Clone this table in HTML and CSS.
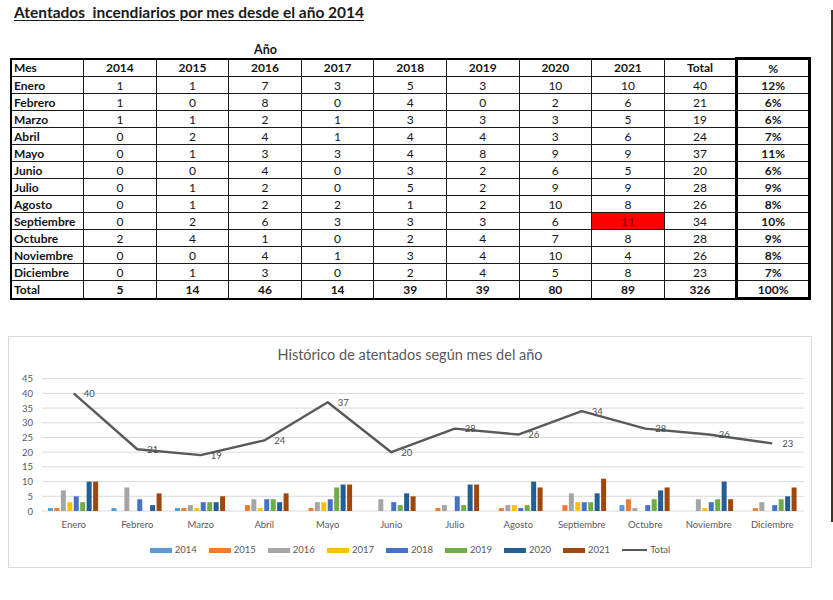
FILE: index.html
```html
<!DOCTYPE html>
<html lang="es">
<head>
<meta charset="utf-8">
<title>Atentados incendiarios por mes desde el año 2014</title>
<link rel="stylesheet" href="styles.css">
</head>
<body>
<div class="page">
  <div class="sheet">
    <h1 class="title">Atentados&nbsp; incendiarios por mes desde el año 2014</h1>
    <div class="anio">Año</div>
    <table class="data">
      <colgroup><col><col><col><col><col><col><col><col><col><col><col></colgroup>
      <tr class="head"><th class="mes">Mes</th><th>2014</th><th>2015</th><th>2016</th><th>2017</th><th>2018</th><th>2019</th><th>2020</th><th>2021</th><th>Total</th><th class="pct">%</th></tr>
      <tr><td class="mes">Enero</td><td>1</td><td>1</td><td>7</td><td>3</td><td>5</td><td>3</td><td>10</td><td>10</td><td>40</td><td class="pct">12%</td></tr>
      <tr><td class="mes">Febrero</td><td>1</td><td>0</td><td>8</td><td>0</td><td>4</td><td>0</td><td>2</td><td>6</td><td>21</td><td class="pct">6%</td></tr>
      <tr><td class="mes">Marzo</td><td>1</td><td>1</td><td>2</td><td>1</td><td>3</td><td>3</td><td>3</td><td>5</td><td>19</td><td class="pct">6%</td></tr>
      <tr><td class="mes">Abril</td><td>0</td><td>2</td><td>4</td><td>1</td><td>4</td><td>4</td><td>3</td><td>6</td><td>24</td><td class="pct">7%</td></tr>
      <tr><td class="mes">Mayo</td><td>0</td><td>1</td><td>3</td><td>3</td><td>4</td><td>8</td><td>9</td><td>9</td><td>37</td><td class="pct">11%</td></tr>
      <tr><td class="mes">Junio</td><td>0</td><td>0</td><td>4</td><td>0</td><td>3</td><td>2</td><td>6</td><td>5</td><td>20</td><td class="pct">6%</td></tr>
      <tr><td class="mes">Julio</td><td>0</td><td>1</td><td>2</td><td>0</td><td>5</td><td>2</td><td>9</td><td>9</td><td>28</td><td class="pct">9%</td></tr>
      <tr><td class="mes">Agosto</td><td>0</td><td>1</td><td>2</td><td>2</td><td>1</td><td>2</td><td>10</td><td>8</td><td>26</td><td class="pct">8%</td></tr>
      <tr><td class="mes">Septiembre</td><td>0</td><td>2</td><td>6</td><td>3</td><td>3</td><td>3</td><td>6</td><td class="alert">11</td><td>34</td><td class="pct">10%</td></tr>
      <tr><td class="mes">Octubre</td><td>2</td><td>4</td><td>1</td><td>0</td><td>2</td><td>4</td><td>7</td><td>8</td><td>28</td><td class="pct">9%</td></tr>
      <tr><td class="mes">Noviembre</td><td>0</td><td>0</td><td>4</td><td>1</td><td>3</td><td>4</td><td>10</td><td>4</td><td>26</td><td class="pct">8%</td></tr>
      <tr><td class="mes">Diciembre</td><td>0</td><td>1</td><td>3</td><td>0</td><td>2</td><td>4</td><td>5</td><td>8</td><td>23</td><td class="pct">7%</td></tr>
      <tr class="total"><td class="mes">Total</td><td>5</td><td>14</td><td>46</td><td>14</td><td>39</td><td>39</td><td>80</td><td>89</td><td>326</td><td class="pct">100%</td></tr>
    </table>

    <div class="chart">
      <h2 class="chart-title">Histórico de atentados según mes del año</h2>
      <svg class="plot" width="802" height="168" viewBox="0 0 802 168" xmlns="http://www.w3.org/2000/svg">
        <g class="grid">
          <line x1="33" x2="795" y1="147" y2="147"/>
          <line x1="33" x2="795" y1="132.3" y2="132.3"/>
          <line x1="33" x2="795" y1="117.6" y2="117.6"/>
          <line x1="33" x2="795" y1="102.9" y2="102.9"/>
          <line x1="33" x2="795" y1="88.2" y2="88.2"/>
          <line x1="33" x2="795" y1="73.5" y2="73.5"/>
          <line x1="33" x2="795" y1="58.8" y2="58.8"/>
          <line x1="33" x2="795" y1="44.1" y2="44.1"/>
          <line x1="33" x2="795" y1="29.4" y2="29.4"/>
          <line x1="33" x2="795" y1="14.7" y2="14.7"/>
        </g>
        <g class="ylab">
          <text x="24" y="147">0</text>
          <text x="24" y="132.3">5</text>
          <text x="24" y="117.6">10</text>
          <text x="24" y="102.9">15</text>
          <text x="24" y="88.2">20</text>
          <text x="24" y="73.5">25</text>
          <text x="24" y="58.8">30</text>
          <text x="24" y="44.1">35</text>
          <text x="24" y="29.4">40</text>
          <text x="24" y="14.7">45</text>
        </g>
        <g transform="translate(0 147) scale(1 -2.94)">
          <g transform="translate(38.95 0)">
            <rect class="s14" x="0" width="5" height="1"/><rect class="s15" x="6.45" width="5" height="1"/><rect class="s16" x="12.9" width="5" height="7"/><rect class="s17" x="19.35" width="5" height="3"/><rect class="s18" x="25.8" width="5" height="5"/><rect class="s19" x="32.25" width="5" height="3"/><rect class="s20" x="38.7" width="5" height="10"/><rect class="s21" x="45.15" width="5" height="10"/>
          </g>
          <g transform="translate(102.45 0)">
            <rect class="s14" x="0" width="5" height="1"/><rect class="s16" x="12.9" width="5" height="8"/><rect class="s18" x="25.8" width="5" height="4"/><rect class="s20" x="38.7" width="5" height="2"/><rect class="s21" x="45.15" width="5" height="6"/>
          </g>
          <g transform="translate(165.95 0)">
            <rect class="s14" x="0" width="5" height="1"/><rect class="s15" x="6.45" width="5" height="1"/><rect class="s16" x="12.9" width="5" height="2"/><rect class="s17" x="19.35" width="5" height="1"/><rect class="s18" x="25.8" width="5" height="3"/><rect class="s19" x="32.25" width="5" height="3"/><rect class="s20" x="38.7" width="5" height="3"/><rect class="s21" x="45.15" width="5" height="5"/>
          </g>
          <g transform="translate(229.45 0)">
            <rect class="s15" x="6.45" width="5" height="2"/><rect class="s16" x="12.9" width="5" height="4"/><rect class="s17" x="19.35" width="5" height="1"/><rect class="s18" x="25.8" width="5" height="4"/><rect class="s19" x="32.25" width="5" height="4"/><rect class="s20" x="38.7" width="5" height="3"/><rect class="s21" x="45.15" width="5" height="6"/>
          </g>
          <g transform="translate(292.95 0)">
            <rect class="s15" x="6.45" width="5" height="1"/><rect class="s16" x="12.9" width="5" height="3"/><rect class="s17" x="19.35" width="5" height="3"/><rect class="s18" x="25.8" width="5" height="4"/><rect class="s19" x="32.25" width="5" height="8"/><rect class="s20" x="38.7" width="5" height="9"/><rect class="s21" x="45.15" width="5" height="9"/>
          </g>
          <g transform="translate(356.45 0)">
            <rect class="s16" x="12.9" width="5" height="4"/><rect class="s18" x="25.8" width="5" height="3"/><rect class="s19" x="32.25" width="5" height="2"/><rect class="s20" x="38.7" width="5" height="6"/><rect class="s21" x="45.15" width="5" height="5"/>
          </g>
          <g transform="translate(419.95 0)">
            <rect class="s15" x="6.45" width="5" height="1"/><rect class="s16" x="12.9" width="5" height="2"/><rect class="s18" x="25.8" width="5" height="5"/><rect class="s19" x="32.25" width="5" height="2"/><rect class="s20" x="38.7" width="5" height="9"/><rect class="s21" x="45.15" width="5" height="9"/>
          </g>
          <g transform="translate(483.45 0)">
            <rect class="s15" x="6.45" width="5" height="1"/><rect class="s16" x="12.9" width="5" height="2"/><rect class="s17" x="19.35" width="5" height="2"/><rect class="s18" x="25.8" width="5" height="1"/><rect class="s19" x="32.25" width="5" height="2"/><rect class="s20" x="38.7" width="5" height="10"/><rect class="s21" x="45.15" width="5" height="8"/>
          </g>
          <g transform="translate(546.95 0)">
            <rect class="s15" x="6.45" width="5" height="2"/><rect class="s16" x="12.9" width="5" height="6"/><rect class="s17" x="19.35" width="5" height="3"/><rect class="s18" x="25.8" width="5" height="3"/><rect class="s19" x="32.25" width="5" height="3"/><rect class="s20" x="38.7" width="5" height="6"/><rect class="s21" x="45.15" width="5" height="11"/>
          </g>
          <g transform="translate(610.45 0)">
            <rect class="s14" x="0" width="5" height="2"/><rect class="s15" x="6.45" width="5" height="4"/><rect class="s16" x="12.9" width="5" height="1"/><rect class="s18" x="25.8" width="5" height="2"/><rect class="s19" x="32.25" width="5" height="4"/><rect class="s20" x="38.7" width="5" height="7"/><rect class="s21" x="45.15" width="5" height="8"/>
          </g>
          <g transform="translate(673.95 0)">
            <rect class="s16" x="12.9" width="5" height="4"/><rect class="s17" x="19.35" width="5" height="1"/><rect class="s18" x="25.8" width="5" height="3"/><rect class="s19" x="32.25" width="5" height="4"/><rect class="s20" x="38.7" width="5" height="10"/><rect class="s21" x="45.15" width="5" height="4"/>
          </g>
          <g transform="translate(737.45 0)">
            <rect class="s15" x="6.45" width="5" height="1"/><rect class="s16" x="12.9" width="5" height="3"/><rect class="s18" x="25.8" width="5" height="2"/><rect class="s19" x="32.25" width="5" height="4"/><rect class="s20" x="38.7" width="5" height="5"/><rect class="s21" x="45.15" width="5" height="8"/>
          </g>
        </g>
        <polyline class="total-line" points="64.75,29.4 128.25,85.26 191.75,91.14 255.25,76.44 318.75,38.22 382.25,88.2 445.75,64.68 509.25,70.56 572.75,47.04 636.25,64.68 699.75,70.56 763.25,79.38"/>
        <g class="dlab">
          <text x="74.75" y="29.4">40</text>
          <text x="138.25" y="85.26">21</text>
          <text x="201.75" y="91.14">19</text>
          <text x="265.25" y="76.44">24</text>
          <text x="328.75" y="38.22">37</text>
          <text x="392.25" y="88.2">20</text>
          <text x="455.75" y="64.68">28</text>
          <text x="519.25" y="70.56">26</text>
          <text x="582.75" y="47.04">34</text>
          <text x="646.25" y="64.68">28</text>
          <text x="709.75" y="70.56">26</text>
          <text x="773.25" y="79.38">23</text>
        </g>
        <g class="xlab">
          <text x="64.75" y="160">Enero</text>
          <text x="128.25" y="160">Febrero</text>
          <text x="191.75" y="160">Marzo</text>
          <text x="255.25" y="160">Abril</text>
          <text x="318.75" y="160">Mayo</text>
          <text x="382.25" y="160">Junio</text>
          <text x="445.75" y="160">Julio</text>
          <text x="509.25" y="160">Agosto</text>
          <text x="572.75" y="160">Septiembre</text>
          <text x="636.25" y="160">Octubre</text>
          <text x="699.75" y="160">Noviembre</text>
          <text x="763.25" y="160">Diciembre</text>
        </g>
      </svg>
      <div class="legend">
        <span class="item"><span class="sw s14"></span>2014</span>
        <span class="item"><span class="sw s15"></span>2015</span>
        <span class="item"><span class="sw s16"></span>2016</span>
        <span class="item"><span class="sw s17"></span>2017</span>
        <span class="item"><span class="sw s18"></span>2018</span>
        <span class="item"><span class="sw s19"></span>2019</span>
        <span class="item"><span class="sw s20"></span>2020</span>
        <span class="item"><span class="sw s21"></span>2021</span>
        <span class="item"><span class="sw line"></span>Total</span>
      </div>
    </div>
  </div>
  <div class="edge"></div>
</div>
</body>
</html>
```

FILE: styles.css
```css
html, body {
  margin: 0;
  padding: 0;
  background: #ffffff;
}
body {
  font-family: Lato, "Open Sans", "Liberation Sans", sans-serif;
  color: #141414;
}
.page {
  display: flex;
  align-items: flex-start;
  width: 833px;
}
.sheet {
  width: 831px;
  flex: none;
}
.edge {
  width: 2px;
  height: 512px;
  margin-top: 10px;
  background: #3b3424;
  flex: none;
}
.title {
  margin: 0;
  padding: 3px 0 0 14px;
  font-size: 15.5px;
  line-height: 18px;
  font-weight: 700;
  text-decoration: underline;
  text-underline-offset: 2px;
  text-decoration-thickness: 1px;
  color: #1a1a1a;
}
.anio {
  margin: 21px 0 0 229px;
  width: 73px;
  text-align: center;
  font-size: 12.5px;
  line-height: 15px;
  font-weight: 700;
}
.data {
  margin: 0 0 0 10px;
  width: 801px;
  border-collapse: collapse;
  table-layout: fixed;
  border: 2px solid #000;
  font-size: 12px;
}
.data th, .data td {
  border: 1px solid #1a1a1a;
  padding: 0;
  height: 16px;
  line-height: 15px;
  text-align: center;
  font-weight: 400;
  overflow: hidden;
  white-space: nowrap;
}
.data th {
  font-weight: 700;
}
.data .mes {
  text-align: left;
  padding-left: 2px;
  font-weight: 700;
}
.data .pct {
  font-weight: 700;
  border-left: 3px solid #000;
  border-right: 3px solid #000;
}
.data .head .pct {
  border-top: 3px solid #000;
}
.data .total td {
  font-weight: 700;
}
.data .total .pct {
  border-bottom: 3px solid #000;
}
.data .alert {
  background: #ff0000;
  color: #7d0000;
}
.chart {
  margin: 36px 0 0 8px;
  width: 804px;
  height: 232px;
  box-sizing: border-box;
  border: 1px solid #d9d9d9;
  color: #595959;
}
.chart-title {
  margin: 0;
  padding-top: 9px;
  font-size: 14.5px;
  line-height: 18px;
  font-weight: 400;
  text-align: center;
  color: #595959;
}
.plot {
  display: block;
}
.grid line {
  stroke: #d9d9d9;
  stroke-width: 1;
}
.ylab text {
  font-family: Lato, "Open Sans", sans-serif;
  font-size: 9.5px;
  fill: #595959;
  text-anchor: end;
  dominant-baseline: central;
}
.xlab text {
  font-family: Lato, "Open Sans", sans-serif;
  font-size: 9.5px;
  fill: #595959;
  text-anchor: middle;
  dominant-baseline: central;
}
.dlab text {
  font-family: Lato, "Open Sans", sans-serif;
  font-size: 9.5px;
  fill: #4d4d4d;
  dominant-baseline: central;
}
.total-line {
  fill: none;
  stroke: #595959;
  stroke-width: 2.4;
  stroke-linejoin: round;
}
.s14 { fill: #5b9bd5; background: #5b9bd5; }
.s15 { fill: #ed7d31; background: #ed7d31; }
.s16 { fill: #a5a5a5; background: #a5a5a5; }
.s17 { fill: #ffc000; background: #ffc000; }
.s18 { fill: #4472c4; background: #4472c4; }
.s19 { fill: #70ad47; background: #70ad47; }
.s20 { fill: #255e91; background: #255e91; }
.s21 { fill: #9e480e; background: #9e480e; }
.legend {
  display: flex;
  justify-content: center;
  gap: 12px;
  margin-top: 11px;
  font-size: 9.5px;
  line-height: 14px;
  color: #595959;
}
.legend .item {
  display: flex;
  align-items: center;
  gap: 3px;
}
.legend .sw {
  display: block;
  width: 22px;
  height: 5px;
}
.legend .sw.line {
  width: 25px;
  height: 2.5px;
  background: #595959;
}
```
